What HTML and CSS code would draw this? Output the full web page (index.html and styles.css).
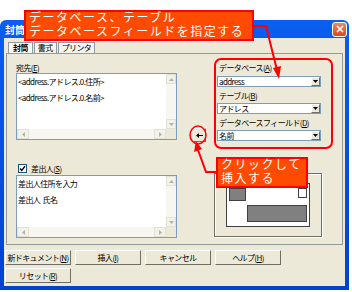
FILE: index.html
```html
<!DOCTYPE html>
<html lang="ja">
<head>
    <meta charset="UTF-8">
    <title>封筒</title>
    <link rel="stylesheet" href="styles.css">
</head>
<body>
    <div class="stage">
        <div class="window">
            <div class="titlebar">
                <span class="title">封筒</span>
                <span class="close">
                    <svg width="8" height="8" viewBox="0 0 8 8"><path d="M1 1L7 7M7 1L1 7" stroke="#fff" stroke-width="1.6"/></svg>
                </span>
            </div>
            <div class="client">
                <div class="tabs">
                    <span class="tab active">封筒</span>
                    <span class="tab">書式</span>
                    <span class="tab">プリンタ</span>
                </div>
                <div class="pane">
                    <div class="col-left">
                        <div class="label first">宛先(<u>E</u>)</div>
                        <div class="listbox lb-addr">
                            <div class="lb-text">
                                <div>&lt;address.アドレス.0.住所&gt;</div>
                                <div>&lt;address.アドレス.0.名前&gt;</div>
                            </div>
                            <div class="vscroll">
                                <span class="sbtn"><svg width="5" height="3" viewBox="0 0 5 3"><path d="M0 3L2.5 0L5 3Z" fill="#b6b3a5"/></svg></span>
                                <span class="track"></span>
                                <span class="sbtn"><svg width="5" height="3" viewBox="0 0 5 3"><path d="M0 0L2.5 3L5 0Z" fill="#b6b3a5"/></svg></span>
                            </div>
                            <div class="hscroll">
                                <span class="sbtn"><svg width="3" height="5" viewBox="0 0 3 5"><path d="M3 0L0 2.5L3 5Z" fill="#b6b3a5"/></svg></span>
                                <span class="track"></span>
                                <span class="sbtn"><svg width="3" height="5" viewBox="0 0 3 5"><path d="M0 0L3 2.5L0 5Z" fill="#b6b3a5"/></svg></span>
                            </div>
                            <div class="corner"></div>
                        </div>
                        <div class="check-row">
                            <span class="checkbox"><svg width="7" height="7" viewBox="0 0 7 7"><path d="M1 3.5L2.8 5.5L6 1.2" stroke="#000" stroke-width="1.4" fill="none"/></svg></span>
                            <span>差出人(<u>S</u>)</span>
                        </div>
                        <div class="listbox lb-sender">
                            <div class="lb-text">
                                <div>差出人住所を入力</div>
                                <div>差出人&nbsp;&nbsp;氏名</div>
                            </div>
                            <div class="vscroll">
                                <span class="sbtn"><svg width="5" height="3" viewBox="0 0 5 3"><path d="M0 3L2.5 0L5 3Z" fill="#b6b3a5"/></svg></span>
                                <span class="track"></span>
                                <span class="sbtn"><svg width="5" height="3" viewBox="0 0 5 3"><path d="M0 0L2.5 3L5 0Z" fill="#b6b3a5"/></svg></span>
                            </div>
                            <div class="hscroll">
                                <span class="sbtn"><svg width="3" height="5" viewBox="0 0 3 5"><path d="M3 0L0 2.5L3 5Z" fill="#b6b3a5"/></svg></span>
                                <span class="track"></span>
                                <span class="sbtn"><svg width="3" height="5" viewBox="0 0 3 5"><path d="M0 0L3 2.5L0 5Z" fill="#b6b3a5"/></svg></span>
                            </div>
                            <div class="corner"></div>
                        </div>
                    </div>

                    <div class="col-mid">
                        <button class="insert-btn">
                            <svg width="7" height="5" viewBox="0 0 7 5"><path d="M0 2.5L3 0V2H7V3H3V5Z" fill="#000"/></svg>
                        </button>
                    </div>

                    <div class="col-right">
                        <div class="db-group">
                            <div class="glabel">データベース(<u>A</u>)</div>
                            <div class="combo"><span class="cval">address</span><span class="cbtn"><svg width="5" height="3" viewBox="0 0 5 3"><path d="M0 0L2.5 3L5 0Z" fill="#000"/></svg></span></div>
                            <div class="glabel">テーブル(<u>B</u>)</div>
                            <div class="combo"><span class="cval">アドレス</span><span class="cbtn"><svg width="5" height="3" viewBox="0 0 5 3"><path d="M0 0L2.5 3L5 0Z" fill="#000"/></svg></span></div>
                            <div class="glabel">データベースフィールド(<u>D</u>)</div>
                            <div class="combo"><span class="cval">名前</span><span class="cbtn"><svg width="5" height="3" viewBox="0 0 5 3"><path d="M0 0L2.5 3L5 0Z" fill="#000"/></svg></span></div>
                        </div>
                        <div class="preview">
                            <div class="envelope">
                                <div class="env-top">
                                    <span class="sender-box"></span>
                                    <span class="stamp"></span>
                                </div>
                                <span class="addr-box"></span>
                            </div>
                        </div>
                    </div>
                </div>

                <div class="buttons">
                    <button class="btn">新ドキュメント(<u>N</u>)</button>
                    <button class="btn">挿入(<u>I</u>)</button>
                    <button class="btn">キャンセル</button>
                    <button class="btn">ヘルプ(<u>H</u>)</button>
                    <button class="btn">リセット(<u>R</u>)</button>
                </div>
            </div>
        </div>

        <!-- annotations drawn over the dialog -->
        <div class="callout callout-top">データベース、テーブル<br>データベースフィールドを指定する</div>
        <div class="callout callout-insert">クリックして<br>挿入する</div>
        <svg class="marks" width="352" height="292" viewBox="0 0 352 292">
            <polyline points="253,26 266,26 277,70" fill="none" stroke="#f00" stroke-width="2"/>
            <path d="M273 68L281 66L279 79Z" fill="#f00"/>
            <polyline points="216,172 206,172 198,150" fill="none" stroke="#f00" stroke-width="2"/>
            <path d="M194 152L202 149L196 141Z" fill="#f00"/>
            <ellipse cx="198" cy="135" rx="8" ry="9" fill="none" stroke="#f00" stroke-width="1.5"/>
        </svg>
    </div>
</body>
</html>
```

FILE: styles.css
```css
body {
    margin: 0;
    background-color: #fff;
    font-family: "Noto Sans CJK JP", "DejaVu Sans", sans-serif;
    font-size: 8px;
    color: #000;
}

.stage {
    position: relative;
    width: 352px;
    height: 292px;
    overflow: hidden;
}

.window {
    margin-top: 20px;
    width: 349px;
    height: 270px;
    box-sizing: border-box;
    background: linear-gradient(#0a5ef0, #0043cf);
    border-radius: 6px 6px 0 0;
    padding: 0 4px 4px 4px;
    display: flex;
    flex-direction: column;
}

.titlebar {
    height: 18px;
    display: flex;
    align-items: center;
    justify-content: space-between;
    padding: 0 0 0 1px;
    margin-right: -2px;
}

.title {
    color: #fff;
    font-weight: bold;
    font-size: 10px;
}

.close {
    width: 13px;
    height: 13px;
    border: 1px solid #fff;
    border-radius: 3px;
    background: linear-gradient(#e88a68, #d54a1f);
    display: flex;
    align-items: center;
    justify-content: center;
}

.client {
    flex: 1;
    background-color: #ece9d8;
    padding: 4px 2px 0 1px;
    display: flex;
    flex-direction: column;
    letter-spacing: -0.6px;
}

.tabs {
    display: flex;
    height: 11px;
    padding-left: 3px;
}

.tab {
    border: 1px solid #919b9c;
    border-bottom: none;
    padding: 0 3px;
    line-height: 10px;
    background-color: #f4f3ee;
    margin-right: 1px;
}

.tab.active {
    font-weight: bold;
    background-color: #fcfcfe;
    padding: 0 4px;
}

.pane {
    border: 1px solid #919b9c;
    background-color: #ece9d8;
    margin-left: 1px;
    padding: 4px 0 6px 9px;
    display: grid;
    grid-template-columns: 161px 13px 111px;
    column-gap: 16px;
    align-items: start;
}

.col-left {
    display: flex;
    flex-direction: column;
}

.label {
    line-height: 11px;
}

.label.first {
    margin-top: 4px;
}

.listbox {
    background-color: #fff;
    border: 1px solid #7f9db9;
    display: grid;
    grid-template-columns: 1fr 10px;
    grid-template-rows: 1fr 10px;
    box-sizing: border-box;
}

.lb-addr {
    height: 67px;
}

.lb-sender {
    height: 63px;
}

.lb-text {
    padding: 0 0 0 1px;
    line-height: 16px;
    white-space: nowrap;
    overflow: hidden;
}

.vscroll {
    display: flex;
    flex-direction: column;
    background-color: #f7f6f1;
}

.hscroll {
    display: flex;
    background-color: #f7f6f1;
}

.track {
    flex: 1;
}

.sbtn {
    width: 10px;
    height: 10px;
    box-sizing: border-box;
    border: 1px solid #e3e1d6;
    background-color: #f2f1ea;
    display: flex;
    align-items: center;
    justify-content: center;
}

.hscroll .sbtn {
    width: 12px;
}

.corner {
    background-color: #ece9d8;
}

.check-row {
    margin-top: 22px;
    height: 13px;
    display: flex;
    align-items: center;
    gap: 4px;
    padding-left: 2px;
}

.checkbox {
    width: 7px;
    height: 7px;
    border: 1px solid #1c5180;
    background-color: #fff;
    display: flex;
    align-items: center;
    justify-content: center;
}

.insert-btn {
    margin-top: 70px;
    width: 13px;
    height: 14px;
    padding: 0;
    border: 1px solid;
    border-color: #fff #716f64 #716f64 #fff;
    background-color: #ece9d8;
    display: flex;
    align-items: center;
    justify-content: center;
}

.col-right {
    margin-left: -8px;
    display: flex;
    flex-direction: column;
}

.db-group {
    border: 2px solid #f00;
    border-radius: 7px;
    padding: 2px 2px 6px 1px;
    height: 91px;
    box-sizing: border-box;
}

.glabel {
    line-height: 12px;
    margin: 3px 0 1px 2px;
    white-space: nowrap;
}

.glabel:first-child {
    margin-top: 0;
    margin-bottom: 2px;
}

.combo {
    width: 104px;
    height: 11px;
    box-sizing: border-box;
    border: 1px solid #7f9db9;
    background-color: #fff;
    display: flex;
    align-items: center;
    justify-content: space-between;
}

.cval {
    padding-left: 1px;
    line-height: 9px;
}

.cbtn {
    width: 9px;
    height: 9px;
    box-sizing: border-box;
    border: 1px solid;
    border-color: #fff #716f64 #716f64 #fff;
    background-color: #ece9d8;
    display: flex;
    align-items: center;
    justify-content: center;
}

.preview {
    margin-top: 24px;
    width: 108px;
    height: 64px;
    box-sizing: border-box;
    border: 1px solid #716f64;
    box-shadow: inset 1px 1px 0 #fff, 1px 1px 0 #fff;
    padding: 9px 12px 0 11px;
}

.envelope {
    width: 84px;
    height: 44px;
    box-sizing: border-box;
    border: 1px solid #404040;
    background-color: #fff;
    padding: 4px 2px 0 2px;
    display: flex;
    flex-direction: column;
}

.env-top {
    display: flex;
    justify-content: space-between;
}

.sender-box {
    width: 17px;
    height: 13px;
    box-sizing: border-box;
    border: 1px solid #404040;
    background-color: #808080;
}

.stamp {
    width: 9px;
    height: 10px;
    box-sizing: border-box;
    border: 1px solid #404040;
    background-color: #fff;
}

.addr-box {
    margin: 4px 0 0 18px;
    width: 60px;
    height: 17px;
    box-sizing: border-box;
    border: 1px solid #404040;
    background-color: #808080;
}

.buttons {
    margin-top: 5px;
    display: grid;
    grid-template-columns: repeat(4, 66px);
    column-gap: 4px;
    row-gap: 3px;
}

.btn {
    height: 15px;
    padding: 0;
    font-family: inherit;
    font-size: 8px;
    letter-spacing: -0.6px;
    line-height: 13px;
    border: 1px solid;
    border-color: #fff #716f64 #716f64 #fff;
    background-color: #ece9d8;
    white-space: nowrap;
}

.callout {
    position: absolute;
    box-sizing: border-box;
    border: 2px solid #f00;
    background-color: #ff4b00;
    color: #fff;
    font-family: "Liberation Sans", "Noto Sans CJK JP", sans-serif;
    font-size: 12px;
    line-height: 13.5px;
    letter-spacing: 1.5px;
    padding: 0 0 0 3px;
    white-space: nowrap;
}

.callout-top {
    left: 24px;
    top: 10px;
    width: 230px;
    height: 31px;
}

.callout-insert {
    left: 216px;
    top: 157px;
    width: 92px;
    height: 31px;
}

.marks {
    position: absolute;
    left: 0;
    top: 0;
}
```
